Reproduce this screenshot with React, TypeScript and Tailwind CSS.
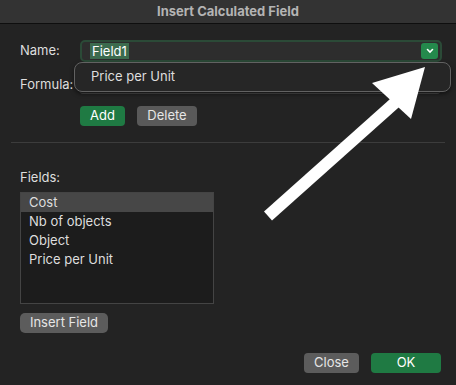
import React from "react";

export default function App() {
  const font = { fontFamily: "Inter, 'Liberation Sans', Arial, sans-serif" };
  return (
    <div
      className="w-[456px] h-[385px] bg-[#232323] text-[#dedede] text-[13px] relative overflow-hidden"
      style={font}
    >
      <div className="h-[24px] bg-[#333333] border-b border-[#0e0e0e] flex items-center justify-center">
        <span className="font-bold text-[13px] text-[#b4b4b4]">Insert Calculated Field</span>
      </div>

      <div className="pl-[20px] pr-[14px]">
        {/* Name row */}
        <div className="flex items-center mt-[16px] h-[22px]">
          <span className="w-[60px]">Name:</span>
          <div className="flex-1 h-[22px] rounded-[5px] bg-[#2d2d2d] border-[2px] border-[#2b4a37] flex items-center pl-[8px] pr-[2px] mr-[0px]">
            <span className="bg-[#3c6b4e] text-white px-[2px] leading-[16px]">Field1</span>
            <div className="ml-auto w-[17px] h-[16px] rounded-[3px] bg-[#24894c] flex items-center justify-center">
              <svg width="10" height="8" viewBox="0 0 10 8">
                <path d="M2.5 2.5 L5 5 L7.5 2.5" stroke="white" strokeWidth="1.6" fill="none" strokeLinecap="round" />
              </svg>
            </div>
          </div>
        </div>

        {/* Formula row */}
        <div className="flex items-center mt-[14px] h-[18px]">
          <span className="w-[60px]">Formula:</span>
          <div className="flex-1 h-[18px] rounded-[3px] bg-[#2a2a2a] border-b border-[#4a4a4a] mr-[2px]" />
        </div>

        {/* Add/Delete */}
        <div className="flex items-center gap-[12px] ml-[60px] mt-[12px]">
          <div className="h-[20px] w-[45px] rounded-[4px] bg-[#1f7a43] flex items-center justify-center text-white">Add</div>
          <div className="h-[20px] w-[60px] rounded-[4px] bg-[#595959] flex items-center justify-center text-[#e6e6e6]">Delete</div>
        </div>
      </div>

      {/* Separator */}
      <div className="mx-[11px] mt-[16px] h-px bg-[#3c3c3c]" />

      <div className="pl-[20px]">
        <div className="mt-[26px] leading-[16px]">Fields:</div>
        <div className="mt-[7px] w-[194px] h-[112px] bg-[#1c1c1c] border border-[#444444] flex flex-col">
          <div className="h-[19px] bg-[#474747] pl-[8px] flex items-center">Cost</div>
          <div className="h-[19px] pl-[8px] flex items-center">Nb of objects</div>
          <div className="h-[19px] pl-[8px] flex items-center">Object</div>
          <div className="h-[19px] pl-[8px] flex items-center">Price per Unit</div>
        </div>
        <div className="mt-[9px] w-[88px] h-[20px] rounded-[5px] bg-[#5c5c5c] flex items-center justify-center text-[#e6e6e6]">
          Insert Field
        </div>
      </div>

      <div className="flex justify-end gap-[12px] pr-[15px] mt-[20px]">
        <div className="w-[55px] h-[20px] rounded-[4px] bg-[#5c5c5c] flex items-center justify-center text-[#e6e6e6]">Close</div>
        <div className="w-[70px] h-[20px] rounded-[4px] bg-[#1f7a43] flex items-center justify-center text-white">OK</div>
      </div>

      {/* Popup dropdown */}
      <div className="absolute left-[74px] top-[62px] w-[377px] h-[30px] rounded-[8px] bg-[#262626] border border-[#626262] flex items-center pl-[16px] shadow-[0_2px_4px_rgba(0,0,0,0.5)]">
        Price per Unit
      </div>

      {/* Arrow */}
      <svg className="absolute left-0 top-0" width="456" height="385" viewBox="0 0 456 385">
        <line x1="268" y1="216" x2="398" y2="100" stroke="white" strokeWidth="12" />
        <polygon points="425,67 372,83 411,119" fill="white" />
      </svg>
    </div>
  );
}
